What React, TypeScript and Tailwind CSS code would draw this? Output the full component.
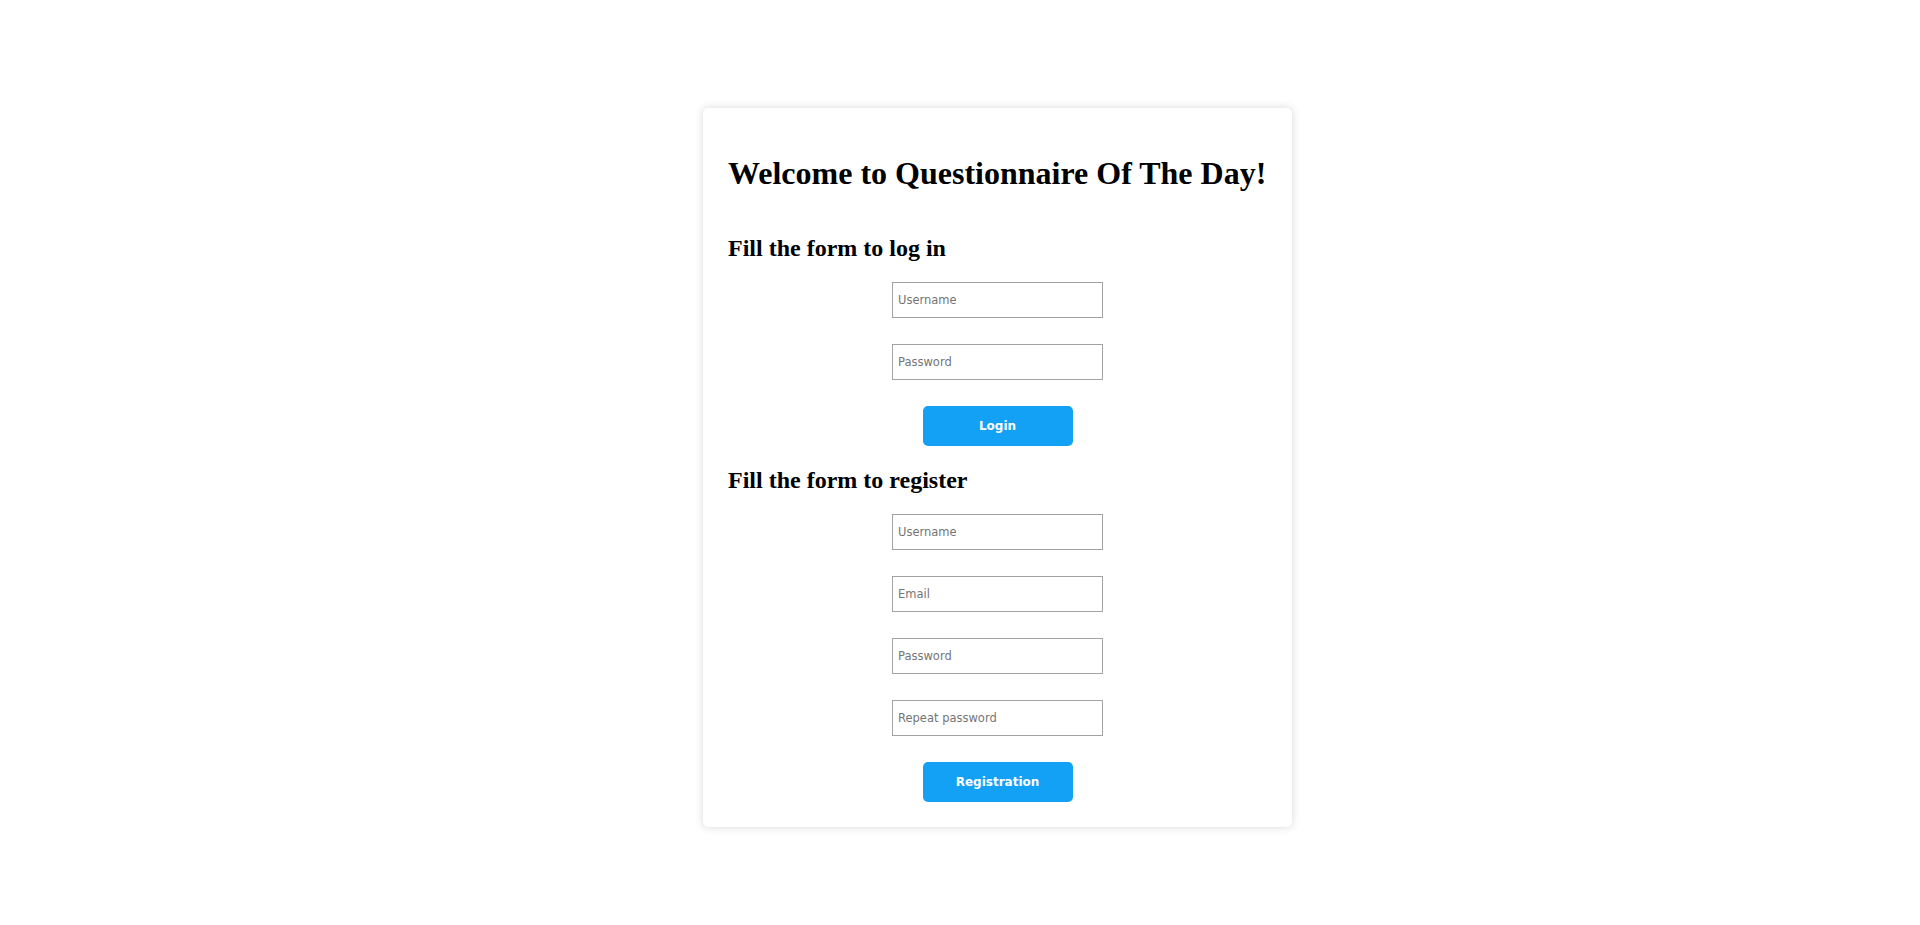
import React, { useState } from 'react';

const inputClass =
  'w-[211px] h-[36px] px-[5px] border border-[#a3a3a3] bg-white text-[11.5px] text-black placeholder:text-[#757575] outline-none';

const buttonClass =
  'w-[150px] h-[40px] rounded-[5px] bg-[#12a1f5] text-white text-[12px] font-bold';

export default function App() {
  const [login, setLogin] = useState({ username: '', password: '' });
  const [reg, setReg] = useState({ username: '', email: '', password: '', repeat: '' });

  return (
    <div className="min-h-screen bg-white flex justify-center pl-[75px] pt-[108px] font-['DejaVu_Sans',sans-serif]">
      <div className="w-[589px] self-start bg-white rounded-[5px] shadow-[0_0_8px_rgba(0,0,0,0.16)] px-[25px] pt-[47px] pb-[25px] flex flex-col">
        <h1 className="font-['Liberation_Serif',serif] font-bold text-[32px] leading-[37px] text-black whitespace-nowrap">
          Welcome to Questionnaire Of The Day!
        </h1>

        <h2 className="mt-[42px] font-['Liberation_Serif',serif] font-bold text-[24px] leading-[28px] text-black">
          Fill the form to log in
        </h2>
        <form className="mt-[20px] flex flex-col items-center gap-[26px]" onSubmit={(e) => e.preventDefault()}>
          <input
            type="text"
            placeholder="Username"
            value={login.username}
            onChange={(e) => setLogin({ ...login, username: e.target.value })}
            className={inputClass}
          />
          <input
            type="password"
            placeholder="Password"
            value={login.password}
            onChange={(e) => setLogin({ ...login, password: e.target.value })}
            className={inputClass}
          />
          <button type="submit" className={buttonClass}>
            Login
          </button>
        </form>

        <h2 className="mt-[20px] font-['Liberation_Serif',serif] font-bold text-[24px] leading-[28px] text-black">
          Fill the form to register
        </h2>
        <form className="mt-[20px] flex flex-col items-center gap-[26px]" onSubmit={(e) => e.preventDefault()}>
          <input
            type="text"
            placeholder="Username"
            value={reg.username}
            onChange={(e) => setReg({ ...reg, username: e.target.value })}
            className={inputClass}
          />
          <input
            type="email"
            placeholder="Email"
            value={reg.email}
            onChange={(e) => setReg({ ...reg, email: e.target.value })}
            className={inputClass}
          />
          <input
            type="password"
            placeholder="Password"
            value={reg.password}
            onChange={(e) => setReg({ ...reg, password: e.target.value })}
            className={inputClass}
          />
          <input
            type="password"
            placeholder="Repeat password"
            value={reg.repeat}
            onChange={(e) => setReg({ ...reg, repeat: e.target.value })}
            className={inputClass}
          />
          <button type="submit" className={buttonClass}>
            Registration
          </button>
        </form>
      </div>
    </div>
  );
}
